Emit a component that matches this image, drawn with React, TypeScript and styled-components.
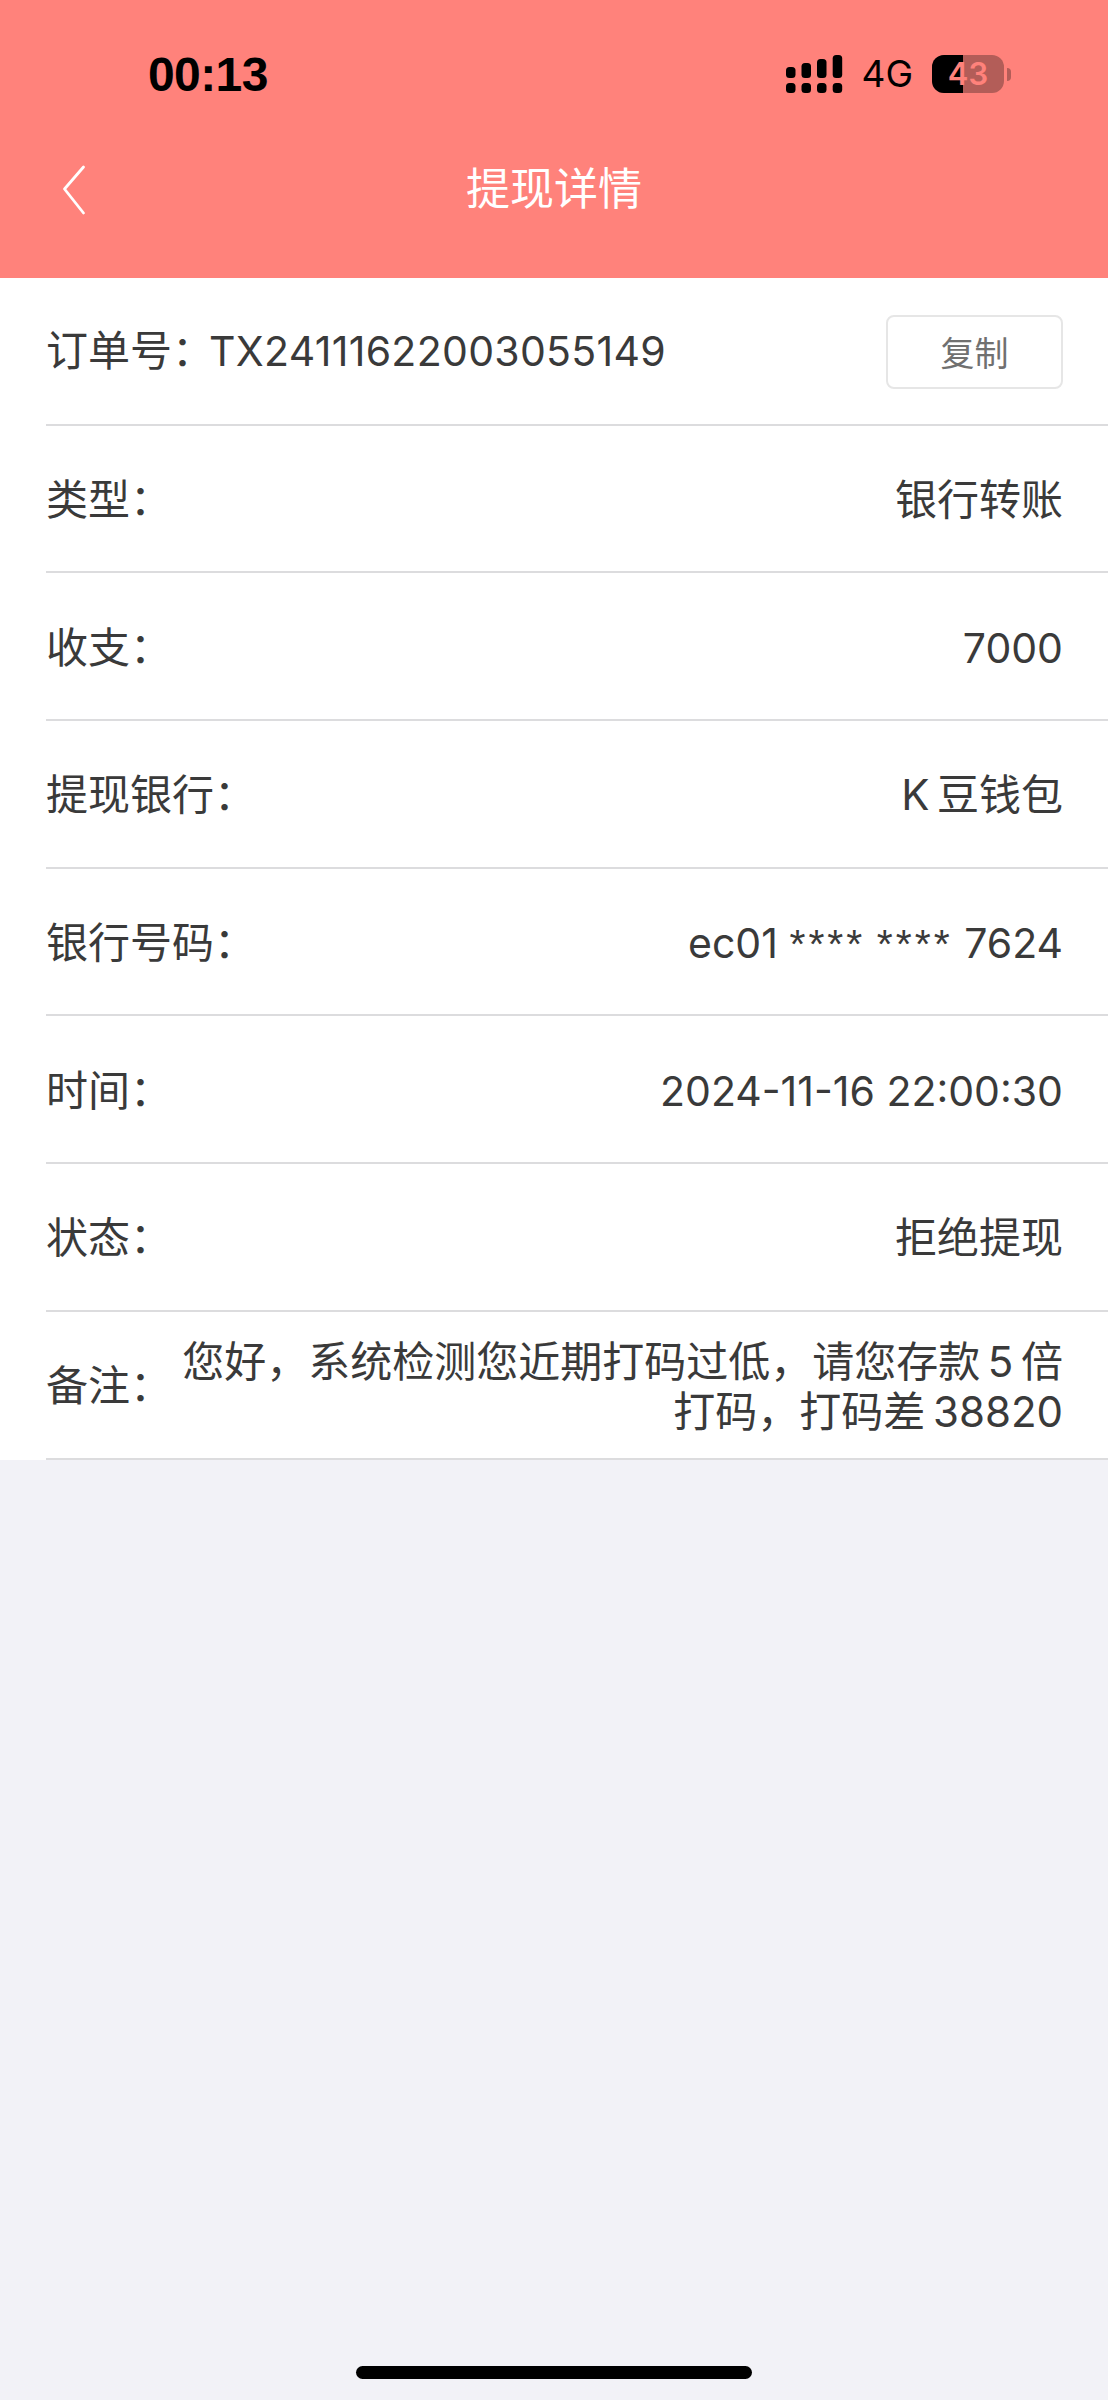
import React from 'react';
import styled, { createGlobalStyle } from 'styled-components';

const GlobalStyle = createGlobalStyle`
    html, body {
        margin: 0;
        padding: 0;
        background: #f2f2f7;
    }
    * {
        box-sizing: border-box;
    }
`;

const Mask = styled.span`
    font-family: 'Liberation Sans', sans-serif;
    letter-spacing: 3px;
`;

const rows: { label: string; value: React.ReactNode; latin?: boolean }[] = [
    { label: '类型：', value: '银行转账' },
    { label: '收支：', value: '7000', latin: true },
    { label: '提现银行：', value: 'K\u2009豆钱包' },
    {
        label: '银行号码：',
        value: (
            <>
                ec01 <Mask>****</Mask> <Mask>****</Mask> 7624
            </>
        ),
        latin: true,
    },
    { label: '时间：', value: '2024-11-16 22:00:30', latin: true },
    { label: '状态：', value: '拒绝提现' },
];

const SignalIcon = () => (
    <svg width="57" height="38" viewBox="0 0 57 38" fill="#000">
        <rect x="0" y="12" width="9.5" height="11" rx="3.5" />
        <rect x="15.5" y="8" width="9.5" height="15" rx="3.5" />
        <rect x="31" y="4" width="9.5" height="19" rx="3.5" />
        <rect x="46.7" y="0" width="9.5" height="23" rx="3.5" />
        <rect x="0" y="28" width="9.5" height="10" rx="3.5" />
        <rect x="15.5" y="28" width="9.5" height="10" rx="3.5" />
        <rect x="31" y="28" width="9.5" height="10" rx="3.5" />
        <rect x="46.7" y="28" width="9.5" height="10" rx="3.5" />
    </svg>
);

const BackIcon = () => (
    <svg width="24" height="50" viewBox="0 0 24 50" fill="none">
        <path d="M21.5 2L2.5 24L21.5 48" stroke="#fff" strokeWidth="2.8" strokeLinecap="round" strokeLinejoin="round" />
    </svg>
);

const App: React.FC = () => {
    return (
        <Page>
            <GlobalStyle />
            <Header>
                <StatusBar>
                    <Time>00:13</Time>
                    <StatusRight>
                        <SignalIcon />
                        <Network>4G</Network>
                        <Battery>
                            <BatteryBody>
                                <BatteryFill />
                                <BatteryLevel>43</BatteryLevel>
                            </BatteryBody>
                            <BatteryCap />
                        </Battery>
                    </StatusRight>
                </StatusBar>
                <NavBar>
                    <BackButton>
                        <BackIcon />
                    </BackButton>
                    <Title>提现详情</Title>
                </NavBar>
            </Header>
            <List>
                <Row>
                    <OrderText>
                        订单号：<OrderNumber>TX24111622003055149</OrderNumber>
                    </OrderText>
                    <CopyButton>复制</CopyButton>
                </Row>
                {rows.map((row) => (
                    <Row key={row.label}>
                        <Label>{row.label}</Label>
                        <Value $latin={row.latin}>{row.value}</Value>
                    </Row>
                ))}
                <Row>
                    <Label>备注：</Label>
                    <Note>您好，系统检测您近期打码过低，请您存款{'\u2009'}5{'\u2009'}倍打码，打码差{'\u2009'}38820</Note>
                </Row>
            </List>
            <HomeIndicator />
        </Page>
    );
};

const Page = styled.div`
    position: relative;
    width: 1108px;
    height: 2400px;
    background: #f2f2f7;
    font-family: 'Inter', 'Noto Sans CJK SC', sans-serif;
    overflow: hidden;
`;

const Header = styled.div`
    height: 278px;
    background: #ff827b;
    display: flex;
    flex-direction: column;
`;

const StatusBar = styled.div`
    height: 150px;
    padding: 52px 97px 0 148px;
    display: flex;
    justify-content: space-between;
    align-items: flex-start;
`;

const Time = styled.div`
    font-family: 'Liberation Sans', sans-serif;
    font-size: 48px;
    line-height: 46px;
    font-weight: 700;
    letter-spacing: -0.6px;
    color: #000;
`;

const StatusRight = styled.div`
    display: flex;
    align-items: center;
    height: 38px;
    margin-top: 3px;
`;

const Network = styled.div`
    font-family: 'Inter', sans-serif;
    font-size: 37px;
    line-height: 38px;
    color: #000;
    margin: 0 19px 0 18px;
`;

const Battery = styled.div`
    display: flex;
    align-items: center;
`;

const BatteryBody = styled.div`
    position: relative;
    width: 72px;
    height: 38px;
    border-radius: 12px;
    background: #b35d58;
    overflow: hidden;
`;

const BatteryFill = styled.div`
    width: 31px;
    height: 100%;
    background: #000;
`;

const BatteryLevel = styled.div`
    position: absolute;
    inset: 0;
    text-align: center;
    font-family: 'Inter', sans-serif;
    font-size: 31px;
    line-height: 38px;
    font-weight: 600;
    color: #ff827b;
`;

const BatteryCap = styled.div`
    width: 4px;
    height: 13px;
    margin-left: 3px;
    border-radius: 0 7px 7px 0;
    background: #b35d58;
`;

const NavBar = styled.div`
    position: relative;
    flex: 1;
    display: flex;
    align-items: flex-start;
    justify-content: center;
`;

const BackButton = styled.div`
    position: absolute;
    left: 62px;
    top: 15px;
    line-height: 0;
`;

const Title = styled.div`
    font-size: 44px;
    line-height: 48px;
    color: #fff;
    margin-top: 15px;
`;

const List = styled.div`
    background: #fff;
    padding-left: 46px;
`;

const Row = styled.div`
    height: 147.7px;
    padding-right: 45px;
    border-bottom: 2px solid #dcdcde;
    display: flex;
    align-items: center;
    justify-content: space-between;
    color: #3a3a3a;
    font-size: 42px;
`;

const Label = styled.div`
    flex-shrink: 0;
    font-size: 42px;
    line-height: 56px;
    margin-top: 3px;
`;

const Value = styled.div<{ $latin?: boolean }>`
    text-align: right;
    font-size: ${(props) => (props.$latin ? '41px' : '42px')};
    line-height: 56px;
    margin-top: 3px;
`;

const OrderText = styled.div`
    font-size: 42px;
    line-height: 56px;
    margin-top: 1px;
`;

const OrderNumber = styled.span`
    font-size: 41px;
    margin-left: -5px;
    letter-spacing: 0.3px;
`;

const CopyButton = styled.div`
    width: 177px;
    height: 74px;
    margin-top: 2px;
    border: 2px solid #e6e6e6;
    border-radius: 8px;
    display: flex;
    align-items: center;
    justify-content: center;
    font-size: 34px;
    color: #707070;
`;

const Note = styled.div`
    width: 885px;
    margin-top: 4px;
    text-align: right;
    font-size: 42px;
    line-height: 50px;
`;

const HomeIndicator = styled.div`
    position: absolute;
    left: 356px;
    bottom: 21px;
    width: 396px;
    height: 13px;
    border-radius: 7px;
    background: #000;
`;

export default App;
